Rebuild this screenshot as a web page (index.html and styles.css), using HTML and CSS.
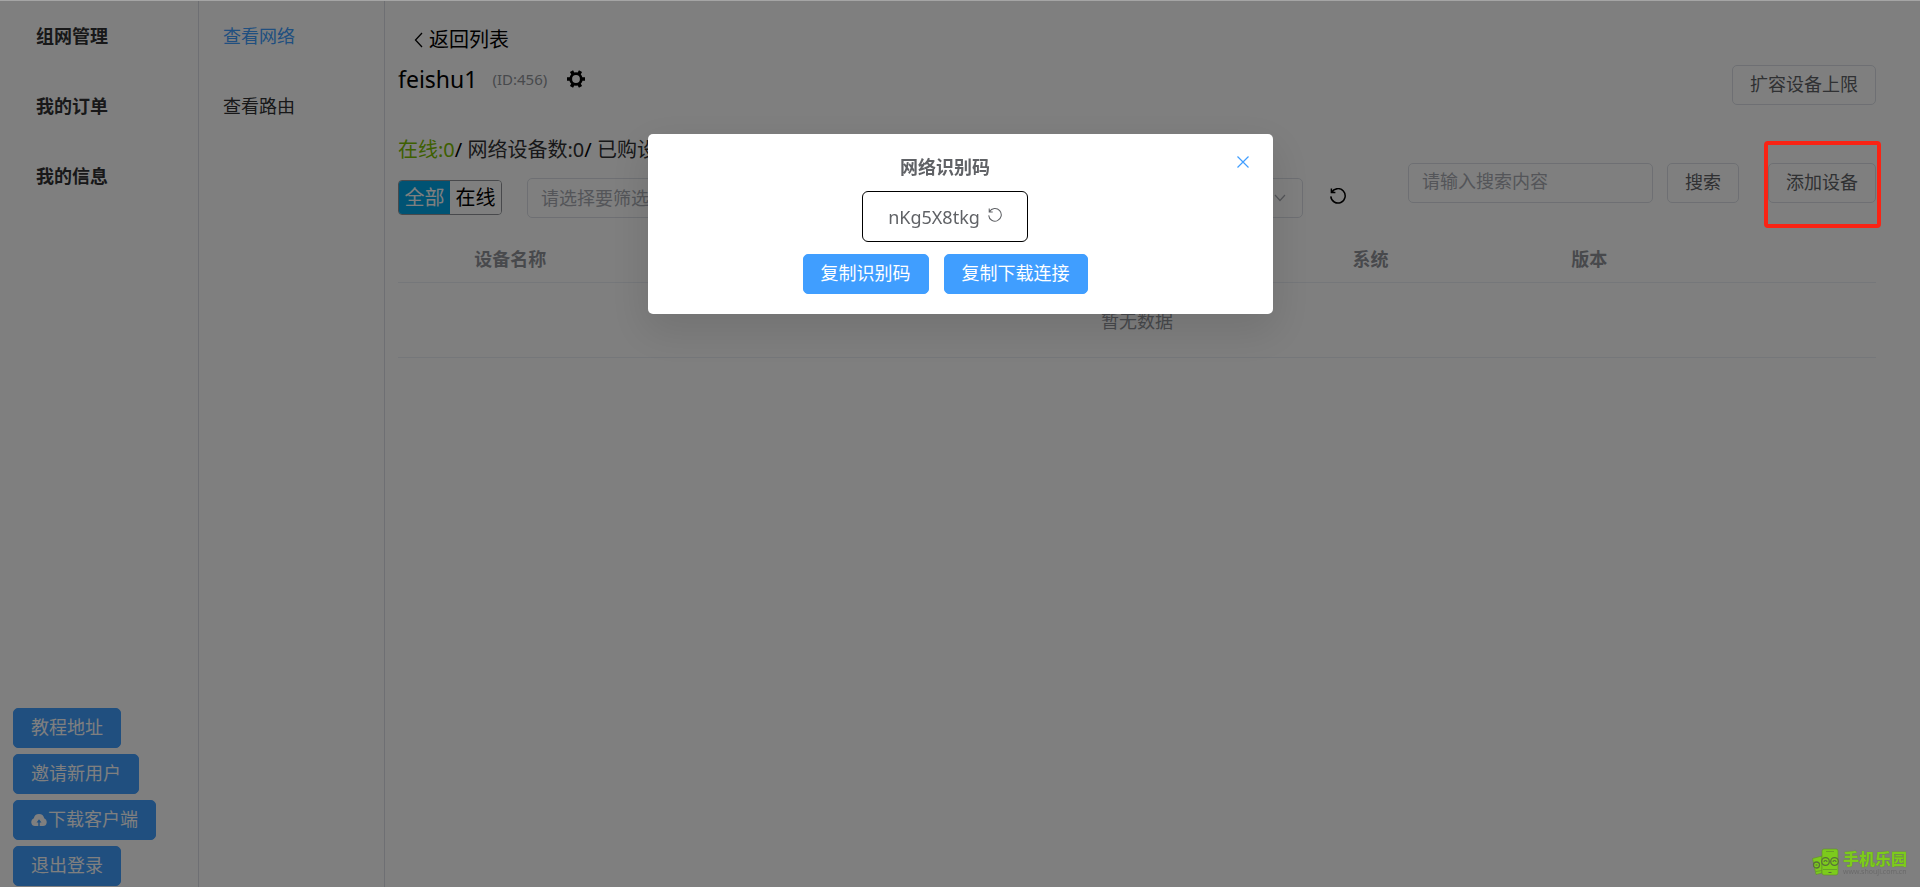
FILE: index.html
```html
<!DOCTYPE html>
<html lang="zh-CN">
<head>
    <meta charset="UTF-8">
    <meta name="viewport" content="width=device-width, initial-scale=1.0">
    <title>组网管理</title>
    <link rel="stylesheet" href="styles.css">
</head>
<body>
    <div class="layout">
        <!-- Main menu -->
        <aside class="sidebar">
            <nav class="menu menu-main">
                <a href="#">组网管理</a>
                <a href="#">我的订单</a>
                <a href="#">我的信息</a>
            </nav>
            <div class="sidebar-actions">
                <button type="button" class="btn btn-primary">教程地址</button>
                <button type="button" class="btn btn-primary">邀请新用户</button>
                <button type="button" class="btn btn-primary">
                    <svg class="icon-cloud" viewBox="0 0 16 12" aria-hidden="true">
                        <path fill="currentColor" fill-rule="evenodd" d="M4 12a4 4 0 0 1-1.200-7.700 5.300 5.300 0 0 1 10.400 0A4 4 0 0 1 12 12H8.700V8.400h1.800L8 5.200 5.500 8.400h1.800V12z"/>
                    </svg>下载客户端
                </button>
                <button type="button" class="btn btn-primary">退出登录</button>
            </div>
        </aside>

        <!-- Sub menu -->
        <aside class="submenu">
            <nav class="menu">
                <a href="#" class="active">查看网络</a>
                <a href="#">查看路由</a>
            </nav>
        </aside>

        <main class="content">
            <a href="#" class="back">
                <svg class="icon-back" viewBox="0 0 9 16" aria-hidden="true">
                    <path d="M8 1 1.500 8 8 15" fill="none" stroke="currentColor" stroke-width="1.300"/>
                </svg>返回列表
            </a>

            <div class="network-head">
                <div class="network-title">
                    <span class="network-name">feishu1</span>
                    <span class="network-id">(ID:456)</span>
                    <button type="button" class="icon-btn" aria-label="设置">
                        <svg class="icon-gear" viewBox="0 0 18 18" aria-hidden="true">
                            <circle cx="9" cy="9" r="5.300" fill="none" stroke="currentColor" stroke-width="2.800"/>
                            <path d="M0 9h3M15 9h3M4.500 1.200l1.500 2.600M12 14.200l1.500 2.600M13.500 1.200 12 3.800M6 14.200l-1.500 2.600" stroke="currentColor" stroke-width="3.600"/>
                        </svg>
                    </button>
                </div>
                <button type="button" class="btn">扩容设备上限</button>
            </div>

            <p class="stats"><span class="online">在线:0</span>/ <span class="stat">网络设备数:0</span>/ <span class="stat">已购设备数:0</span></p>

            <div class="toolbar">
                <div class="tabs">
                    <button type="button" class="tab tab-active">全部</button>
                    <button type="button" class="tab">在线</button>
                </div>
                <div class="select-wrap">
                    <select class="select" aria-label="筛选">
                        <option>请选择要筛选的</option>
                    </select>
                    <svg class="icon-arrow" viewBox="0 0 12 8" aria-hidden="true">
                        <path d="M1 1l5 5.500L11 1" fill="none" stroke="currentColor" stroke-width="1.200"/>
                    </svg>
                </div>
                <button type="button" class="icon-btn refresh" aria-label="刷新">
                    <svg class="icon-refresh" viewBox="0 0 16 16" aria-hidden="true">
                        <path d="M1.700 4.300A7.200 7.200 0 1 1 .8 8.400M1.400.6v4h4" fill="none" stroke="currentColor" stroke-width="1.500"/>
                    </svg>
                </button>
                <div class="search">
                    <input type="text" class="input" placeholder="请输入搜索内容" aria-label="搜索内容">
                    <button type="button" class="btn">搜索</button>
                    <div class="add-device">
                        <button type="button" class="btn">添加设备</button>
                        <span class="highlight"></span>
                    </div>
                </div>
            </div>

            <table class="device-table">
                <thead>
                    <tr>
                        <th class="col-name">设备名称</th>
                        <th class="col-detail" colspan="3"></th>
                        <th class="col-info">系统</th>
                        <th class="col-info">版本</th>
                        <th></th>
                    </tr>
                </thead>
                <tbody>
                    <tr>
                        <td colspan="7">暂无数据</td>
                    </tr>
                </tbody>
            </table>
        </main>
    </div>

    <!-- Network code dialog -->
    <div class="overlay">
        <div class="dialog" role="dialog" aria-labelledby="dialog-title">
            <button type="button" class="icon-btn dialog-close" aria-label="关闭">
                <svg class="icon-close" viewBox="0 0 12 12" aria-hidden="true">
                    <path d="M.5.5l11 11M11.500.5l-11 11" fill="none" stroke="currentColor" stroke-width="1.200"/>
                </svg>
            </button>
            <h2 class="dialog-title" id="dialog-title">网络识别码</h2>
            <div class="code-box">
                <span>nKg5X8tkg</span>
                <button type="button" class="icon-btn code-refresh" aria-label="刷新识别码">
                    <svg class="icon-refresh-small" viewBox="0 0 16 16" aria-hidden="true">
                        <path d="M1.700 4.300A7.200 7.200 0 1 1 .8 8.400M1.400.6v4h4" fill="none" stroke="currentColor" stroke-width="1.200"/>
                    </svg>
                </button>
            </div>
            <div class="dialog-actions">
                <button type="button" class="btn btn-primary">复制识别码</button>
                <button type="button" class="btn btn-primary">复制下载连接</button>
            </div>
        </div>
    </div>

    <div class="site-mark">
        <svg class="mark-logo" viewBox="0 0 29 28" aria-hidden="true">
            <path d="M1.500 10.500 11 8v17l-6 1.500z" fill="#7ccb1c" stroke="#5f8f2c" stroke-width=".6"/>
            <rect x="11" y="1" width="16" height="26" rx="2" fill="#7ccb1c" stroke="#5f8f2c" stroke-width=".6"/>
            <path d="M15 3.500h8M12 21.500h14M5 23.500l6-1" stroke="#63972b" stroke-width=".8"/>
            <g fill="#7ccb1c" stroke="#59703a" stroke-width="1.300">
                <circle cx="5.500" cy="17" r="3"/>
                <circle cx="14.500" cy="13.500" r="3.800"/>
                <circle cx="23.500" cy="13.500" r="3.800"/>
            </g>
            <path d="M13 14a1.500 1.500 0 0 1 3 0M22 14a1.500 1.500 0 0 1 3 0M4.500 17h2M17.500 24.500h3" fill="none" stroke="#59703a" stroke-width="1.200"/>
        </svg>
        <div class="mark-text">
            <span class="mark-name">手机乐园</span>
            <span class="mark-url">www.shouji.com.cn</span>
        </div>
    </div>
</body>
</html>
```

FILE: styles.css
```css
/* General Styles */
* {
    box-sizing: border-box;
}

body {
    margin: 0;
    border-top: 1px solid #a5a5a5;
    font-family: "Noto Sans", "Noto Sans CJK SC", sans-serif;
    font-size: 18px;
    color: #000;
    background: #fff;
}

a {
    color: inherit;
    text-decoration: none;
}

button,
input,
select {
    font: inherit;
}

svg {
    display: block;
}

.layout {
    display: flex;
    min-height: calc(100vh - 1px);
}

/* Side menus */
.sidebar {
    display: flex;
    flex-direction: column;
    justify-content: space-between;
    width: 199px;
    border-right: 1px solid #dcdfe6;
}

.submenu {
    width: 186px;
    border-right: 1px solid #dcdfe6;
}

.menu a {
    display: block;
    padding-left: 24px;
    line-height: 70px;
    color: #303133;
}

.menu-main a {
    padding-left: 36px;
    font-weight: bold;
}

.menu .active {
    color: #409eff;
}

.sidebar-actions {
    display: flex;
    flex-direction: column;
    align-items: flex-start;
    gap: 6px;
    padding: 0 0 1px 13px;
}

/* Buttons */
.btn {
    display: flex;
    align-items: center;
    gap: 1px;
    height: 40px;
    padding: 0 17px 4px;
    border: 1px solid #dcdfe6;
    border-radius: 5px;
    background: #fff;
    color: #606266;
    white-space: nowrap;
    cursor: pointer;
}

.btn-primary {
    border-color: #409eff;
    background: #409eff;
    color: #fff;
}

.icon-btn {
    padding: 0;
    border: none;
    background: none;
    color: inherit;
    cursor: pointer;
}

.icon-cloud {
    width: 16px;
    height: 12px;
    margin-top: 3px;
}

/* Content */
.content {
    flex: 1;
    padding: 22px 44px 0 13px;
}

.back {
    display: inline-flex;
    align-items: center;
    gap: 6px;
    padding-left: 16px;
    font-size: 20px;
    line-height: 34px;
}

.icon-back {
    width: 9px;
    height: 16px;
}

.network-head {
    display: flex;
    justify-content: space-between;
    align-items: flex-end;
    height: 48px;
}

.network-title {
    display: flex;
    align-items: center;
    align-self: flex-start;
    line-height: 44px;
}

.network-name {
    margin-right: 15px;
    font-size: 23px;
}

.network-id {
    margin-right: 20px;
    font-size: 15px;
    color: #909399;
}

.icon-gear {
    width: 18px;
    height: 18px;
}

.stats {
    margin: 30px 0 0;
    font-size: 20px;
    line-height: 30px;
}

.online {
    color: #7cc000;
}

.stat {
    color: #303133;
}

.toolbar {
    display: flex;
    align-items: flex-start;
    padding-top: 13px;
}

.tabs {
    display: flex;
    margin-top: 2px;
    border: 1px solid #909399;
    border-radius: 4px;
    overflow: hidden;
}

.tab {
    width: 51px;
    height: 33px;
    padding: 0;
    border: none;
    background: #fff;
    font-size: 20px;
    line-height: 33px;
}

.tab-active {
    background: #00a7e8;
    color: #fff;
}

.select-wrap {
    position: relative;
    flex: 1;
    margin: 0 27px 0 25px;
}

.select,
.input {
    height: 40px;
    border: 1px solid #dcdfe6;
    border-radius: 5px;
    background: #fff;
    color: #a8abb2;
}

.select {
    width: 100%;
    padding: 0 13px;
    appearance: none;
}

.icon-arrow {
    position: absolute;
    top: 16px;
    right: 17px;
    width: 12px;
    height: 8px;
    color: #a8abb2;
}

.refresh {
    margin-top: 10px;
}

.icon-refresh {
    width: 16px;
    height: 16px;
}

.icon-refresh-small {
    width: 14px;
    height: 14px;
}

.search {
    display: flex;
    margin: -15px 0 0 62px;
}

.input {
    width: 245px;
    margin-right: 14px;
    padding: 0 13px 4px;
}

.input::placeholder {
    color: #a8abb2;
}

/* Outlined action */
.add-device {
    position: relative;
    margin-left: 29px;
}

.highlight {
    position: absolute;
    inset: -22px -5px -25px -4px;
    z-index: 20;
    border: 4px solid #fa2314;
    border-radius: 4px;
    pointer-events: none;
}

/* Device table */
.device-table {
    width: 100%;
    margin-top: 17px;
    border-collapse: collapse;
    table-layout: fixed;
    color: #909399;
    text-align: center;
}

.device-table th,
.device-table td {
    padding: 0;
    border-bottom: 1px solid #ebeef5;
}

.device-table th {
    height: 47px;
}

.device-table td {
    height: 75px;
}

.col-name {
    width: 15.2%;
}

.col-detail {
    width: 43.2%;
}

.col-info {
    width: 14.8%;
}

/* Dialog */
.overlay {
    position: fixed;
    inset: 1px 0 0;
    z-index: 10;
    background: rgba(0, 0, 0, 0.5);
}

.dialog {
    position: relative;
    display: flex;
    flex-direction: column;
    align-items: center;
    width: 625px;
    margin: 133px auto 0;
    padding: 19px 30px 20px 0;
    border-radius: 5px;
    background: #fff;
    box-shadow: 0 15px 40px 5px rgba(0, 0, 0, 0.1);
    color: #606266;
}

.dialog-close {
    position: absolute;
    top: 22px;
    right: 24px;
    color: #409eff;
}

.icon-close {
    width: 12px;
    height: 12px;
}

.dialog-title {
    margin: 0;
    font-size: 18px;
    line-height: 28px;
}

.code-box {
    display: flex;
    align-items: center;
    gap: 8px;
    height: 51px;
    margin: 10px 0 12px;
    padding: 0 25px;
    border: 1px solid #000;
    border-radius: 6px;
}

.code-refresh {
    margin-bottom: 4px;
}

.dialog-actions {
    display: flex;
    gap: 15px;
}

/* Site mark */
.site-mark {
    position: fixed;
    right: 13px;
    bottom: 11px;
    z-index: 20;
    display: flex;
    align-items: center;
    gap: 3px;
}

.mark-logo {
    width: 29px;
    height: 28px;
}

.mark-text {
    display: flex;
    flex-direction: column;
    padding-top: 3px;
}

.mark-name {
    font-size: 16px;
    font-weight: 900;
    line-height: 18px;
    color: #7ccb1c;
    text-shadow: 0 0 1px #59703a;
}

.mark-url {
    font-size: 7px;
    line-height: 8px;
    color: #6a6a6a;
}
```
